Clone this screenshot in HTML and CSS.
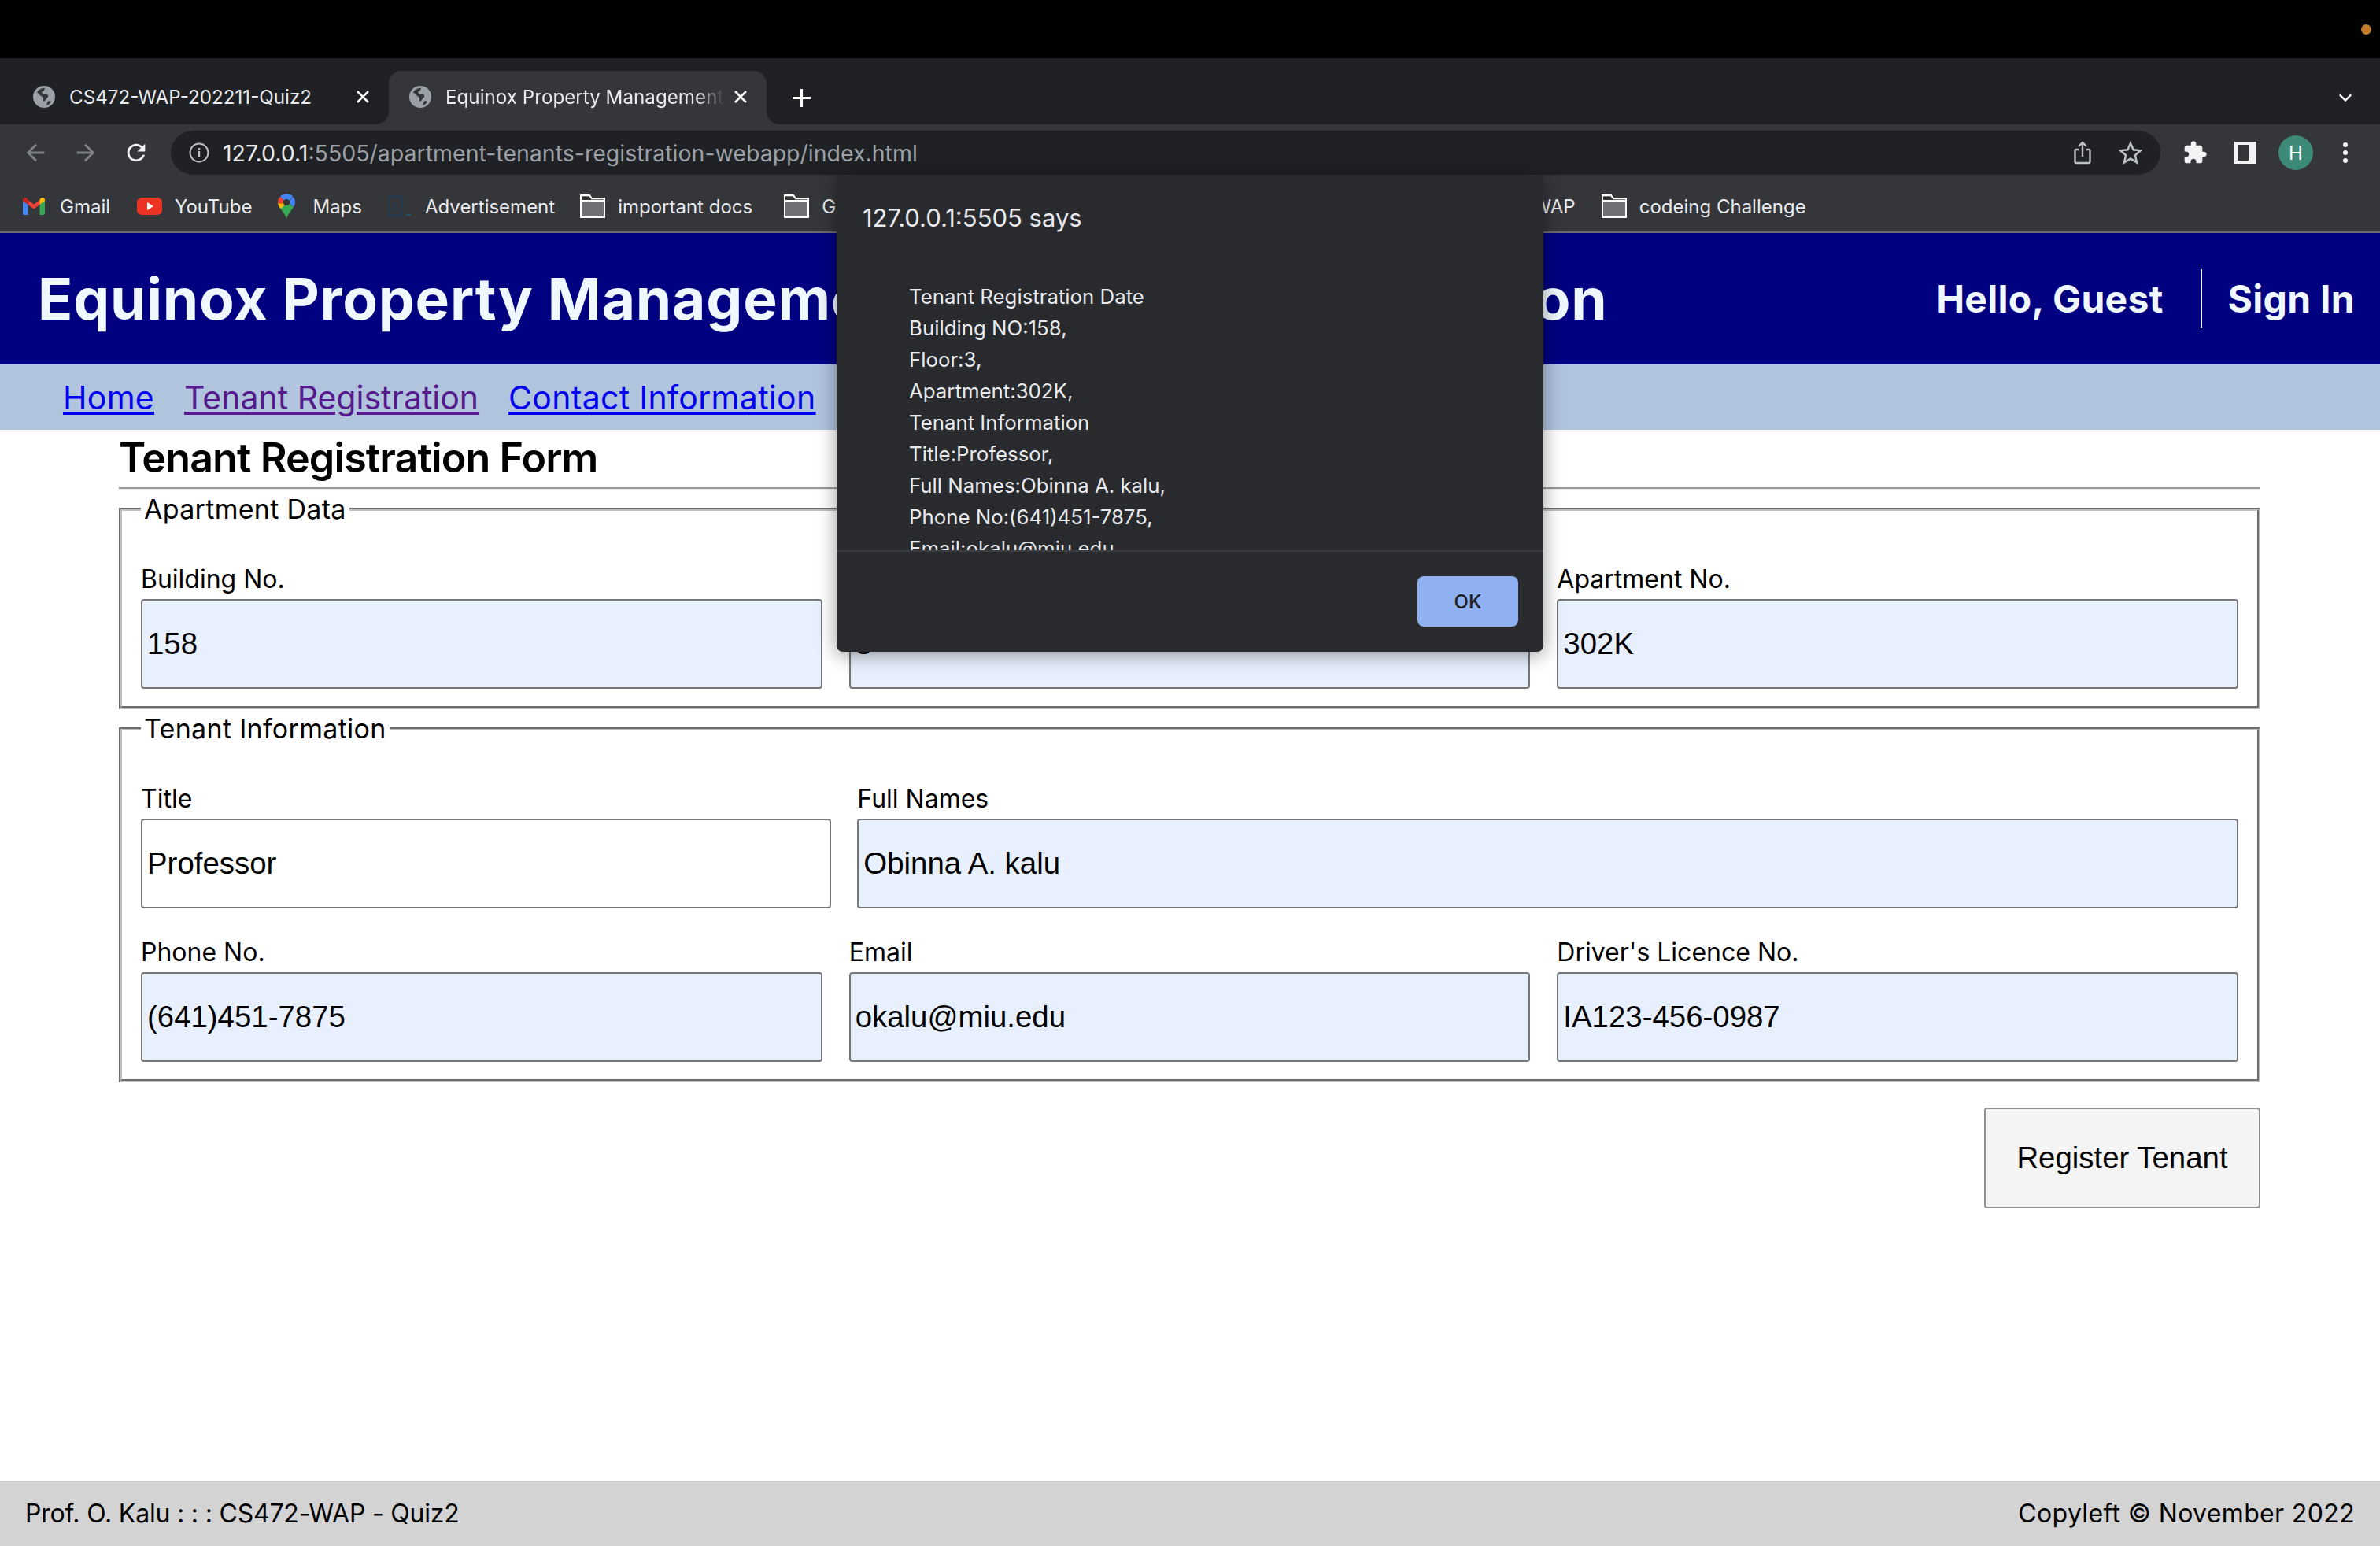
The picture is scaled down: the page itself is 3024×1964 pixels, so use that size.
FILE: index.html
```html
<!DOCTYPE html>
<html lang="en">
<head>
    <meta charset="UTF-8">
    <meta name="viewport" content="width=device-width, initial-scale=1.0">
    <title>Equinox Property Management</title>
    <link rel="stylesheet" href="styles.css">
</head>
<body>
    <svg class="defs" width="0" height="0">
        <symbol id="globe" viewBox="0 0 28 28">
            <circle cx="14" cy="14" r="14" fill="#9aa0a6"/>
            <path d="M13 3c-3 .4-6 2-8 5l5 5c1 1 3 1 3 3v3c0 1 2 1 2 0l4-5c1-1 0-3-2-3h-4l-2-3 3-2 1-3z" fill="#35363a"/>
            <path d="M20 19l3 1c-1 2-3 4-6 5l1-4z" fill="#35363a"/>
        </symbol>
        <symbol id="folder" viewBox="0 0 32 30">
            <path d="M1 1h11l3 4h16v24H1z" fill="#6f7073" stroke="#fff" stroke-width="2"/>
            <path d="M1 8h30" stroke="#fff" stroke-width="2"/>
            <path d="M2 6h12M2 4h10" stroke="#35363a" stroke-width="2"/>
        </symbol>
        <symbol id="close" viewBox="0 0 18 18">
            <path d="M2 2l14 14M16 2L2 16" stroke="#fff" stroke-width="2.500"/>
        </symbol>
    </svg>

    <div class="os-bar"><span class="os-dot"></span></div>

    <div class="tab-strip">
        <div class="tab">
            <svg class="tab-icon"><use href="#globe"/></svg>
            <span class="tab-title">CS472-WAP-202211-Quiz2</span>
            <svg class="tab-close"><use href="#close"/></svg>
        </div>
        <div class="tab tab-active">
            <svg class="tab-icon"><use href="#globe"/></svg>
            <span class="tab-title tab-fade">Equinox Property Management</span>
            <svg class="tab-close"><use href="#close"/></svg>
        </div>
        <svg class="new-tab" viewBox="0 0 24 24"><path d="M12 1v22M1 12h22" stroke="#fff" stroke-width="3"/></svg>
        <svg class="tab-list" viewBox="0 0 20 12"><path d="M2 2l8 8 8-8" fill="none" stroke="#fff" stroke-width="2.500"/></svg>
    </div>

    <div class="toolbar">
        <svg class="nav-icon" viewBox="0 0 24 24"><path fill="#7f8285" d="M20 11H7.830l5.590-5.590L12 4l-8 8 8 8 1.410-1.410L7.830 13H20v-2z"/></svg>
        <svg class="nav-icon" viewBox="0 0 24 24"><path fill="#7f8285" d="M4 11h12.170l-5.590-5.590L12 4l8 8-8 8-1.410-1.410L16.170 13H4v-2z"/></svg>
        <svg class="nav-icon" viewBox="0 0 24 24"><path fill="#f1f3f4" d="M17.650 6.350C16.200 4.900 14.210 4 12 4c-4.420 0-7.990 3.580-7.990 8s3.570 8 7.990 8c3.730 0 6.840-2.550 7.730-6h-2.080c-.82 2.330-3.040 4-5.650 4-3.310 0-6-2.690-6-6s2.690-6 6-6c1.660 0 3.140.69 4.220 1.780L13 11h7V4l-2.350 2.350z"/></svg>
        <div class="address-bar">
            <svg class="info-icon" viewBox="0 0 26 26"><circle cx="13" cy="13" r="11.500" fill="none" stroke="#bdc1c6" stroke-width="2"/><path d="M13 11v8M13 7v2.400" stroke="#bdc1c6" stroke-width="2.400"/></svg>
            <span class="url"><span class="url-host">127.0.0.1</span>:5505/apartment-tenants-registration-webapp/index.html</span>
            <svg class="bar-icon" viewBox="0 0 24 30"><path d="M7 11H4a1.500 1.500 0 0 0-1.500 1.500v14A1.500 1.500 0 0 0 4 28h16a1.500 1.500 0 0 0 1.500-1.500v-14A1.500 1.500 0 0 0 20 11h-3M12 20V3M7 7l5-5 5 5" fill="none" stroke="#bdc1c6" stroke-width="2.400"/></svg>
            <svg class="bar-icon star-icon" viewBox="0 0 30 30"><path d="M15 3l3.700 8.400 9.100.9-6.900 6 2 9-7.900-4.700-7.900 4.700 2-9-6.900-6 9.100-.9z" fill="none" stroke="#bdc1c6" stroke-width="2.600"/></svg>
        </div>
        <svg class="puzzle" viewBox="0 0 24 24"><path fill="#f1f3f4" d="M20.500 11H19V7c0-1.100-.9-2-2-2h-4V3.500C13 2.120 11.880 1 10.500 1S8 2.120 8 3.500V5H4c-1.100 0-1.990.9-1.990 2v3.800H3.500c1.490 0 2.700 1.210 2.700 2.700s-1.210 2.700-2.700 2.700H2V20c0 1.100.9 2 2 2h3.800v-1.500c0-1.490 1.210-2.700 2.700-2.700 1.490 0 2.700 1.210 2.700 2.700V22H17c1.100 0 2-.9 2-2v-4h1.500c1.380 0 2.500-1.120 2.500-2.500S21.880 11 20.500 11z"/></svg>
        <span class="side-panel"></span>
        <span class="avatar">H</span>
        <span class="menu-dots"><i></i><i></i><i></i></span>
    </div>

    <div class="bookmarks">
        <div class="bookmark gmail">
            <svg class="bm-icon" viewBox="0 0 28 22">
                <path fill="#4285f4" d="M0 3v17a2 2 0 0 0 2 2h4.500V9z"/>
                <path fill="#34a853" d="M28 3v17a2 2 0 0 1-2 2h-4.500V9z"/>
                <path fill="#ea4335" d="M6.500 9L14 14.500 21.500 9V3L14 8.500 6.500 3z"/>
                <path fill="#c5221f" d="M0 3c0-2.500 3-3.800 5-2.200L6.500 2v7L0 4z"/>
                <path fill="#fbbc04" d="M28 3c0-2.500-3-3.800-5-2.200L21.500 2v7L28 4z"/>
            </svg>
            <span>Gmail</span>
        </div>
        <div class="bookmark youtube">
            <svg class="bm-icon" viewBox="0 0 32 22"><rect width="32" height="22" rx="6" fill="#ea3323"/><path d="M13 6l8 5-8 5z" fill="#fff"/></svg>
            <span>YouTube</span>
        </div>
        <div class="bookmark maps">
            <svg class="bm-icon" viewBox="0 0 22 32">
                <path fill="#34a853" d="M2 17c3 5 7 8 9 15 2-7 6-10 9-15l-5-4z"/>
                <path fill="#fbbc04" d="M2 17c-1-2-2-4-2-6l7-1 3 3-6 6z"/>
                <path fill="#ea4335" d="M0 11c0-3 1-5 3-7l6 5-4 4-5-1z"/>
                <path fill="#4285f4" d="M3 4c4-5 13-5 16 0l-5 5-5 0z"/>
                <path fill="#4285f4" d="M19 4c2 2 3 4 3 7 0 2-1 4-2 6l-6-6z"/>
                <circle cx="11" cy="11" r="4" fill="#35363a"/>
            </svg>
            <span>Maps</span>
        </div>
        <div class="bookmark advert">
            <svg class="bm-icon" viewBox="0 0 32 26"><path d="M1 1h16v24H1z" fill="none" stroke="#1e3a50" stroke-width="2"/><path d="M12 10H7v7h5" fill="none" stroke="#1e3a50" stroke-width="2"/><path d="M22 24h6" stroke="#27506e" stroke-width="2"/></svg>
            <span>Advertisement</span>
        </div>
        <div class="bookmark">
            <svg class="bm-icon"><use href="#folder"/></svg>
            <span>important docs</span>
        </div>
        <div class="bookmark">
            <svg class="bm-icon"><use href="#folder"/></svg>
            <span>GitHub</span>
        </div>
        <div class="bookmark wap">
            <span>WAP</span>
        </div>
        <div class="bookmark">
            <svg class="bm-icon"><use href="#folder"/></svg>
            <span>codeing Challenge</span>
        </div>
    </div>

    <header class="site-header">
        <h1>Equinox Property Management Apartment Registration</h1>
        <div class="user-box">
            <span class="hello">Hello, Guest</span>
            <span class="sign-in">Sign In</span>
        </div>
    </header>

    <nav class="site-nav">
        <a href="#home" class="nav-link">Home</a>
        <a href="#register" class="nav-link visited">Tenant Registration</a>
        <a href="#contact" class="nav-link">Contact Information</a>
    </nav>

    <main>
        <h2>Tenant Registration Form</h2>
        <hr>
        <form>
            <fieldset>
                <legend>Apartment Data</legend>
                <div class="row row-3">
                    <div class="field"><label>Building No.</label><input class="filled" value="158"></div>
                    <div class="field"><label>Floor</label><input class="filled" value="3"></div>
                    <div class="field"><label>Apartment No.</label><input class="filled" value="302K"></div>
                </div>
            </fieldset>
            <fieldset>
                <legend>Tenant Information</legend>
                <div class="row row-1-2">
                    <div class="field"><label>Title</label><input value="Professor"></div>
                    <div class="field"><label>Full Names</label><input class="filled" value="Obinna A. kalu"></div>
                </div>
                <div class="row row-3">
                    <div class="field"><label>Phone No.</label><input class="filled" value="(641)451-7875"></div>
                    <div class="field"><label>Email</label><input class="filled" value="okalu@miu.edu"></div>
                    <div class="field"><label>Driver's Licence No.</label><input class="filled" value="IA123-456-0987"></div>
                </div>
            </fieldset>
            <div class="form-actions">
                <button type="button">Register Tenant</button>
            </div>
        </form>
    </main>

    <footer>
        <span class="foot-left">Prof. O. Kalu : : : CS472-WAP - Quiz2</span>
        <span class="foot-right">Copyleft &copy; November 2022</span>
    </footer>

    <div class="alert-box">
        <div class="alert-title">127.0.0.1:5505 says</div>
        <div class="alert-message">
            <p>Tenant Registration Date</p>
            <p>Building NO:158,</p>
            <p>Floor:3,</p>
            <p>Apartment:302K,</p>
            <p>Tenant Information</p>
            <p>Title:Professor,</p>
            <p>Full Names:Obinna A. kalu,</p>
            <p>Phone No:(641)451-7875,</p>
            <p>Email:okalu@miu.edu</p>
        </div>
        <div class="alert-actions">
            <button type="button" class="alert-ok">OK</button>
        </div>
    </div>
</body>
</html>
```

FILE: styles.css
```css
* {
    box-sizing: border-box;
}
body {
    margin: 0;
    min-height: 100vh;
    display: flex;
    flex-direction: column;
    font-family: Inter, "Noto Sans", sans-serif;
    background: #fff;
    color: #000;
}
.defs {
    display: none;
}

/* browser chrome */
.os-bar {
    height: 74px;
    background: #000;
    display: flex;
    align-items: center;
    justify-content: flex-end;
    padding-right: 11px;
}
.os-dot {
    width: 13px;
    height: 13px;
    border-radius: 50%;
    background: #c17d2c;
}
.tab-strip {
    height: 84px;
    background: #202124;
    display: flex;
    align-items: flex-end;
}
.tab {
    width: 494px;
    height: 68px;
    padding: 0 24px 2px 42px;
    display: flex;
    align-items: center;
    color: #e8eaed;
    font-size: 24.200px;
}
.tab-active {
    position: relative;
    width: 480px;
    padding: 0 24px 2px 26px;
    background: #35363a;
    border-radius: 16px 16px 0 0;
}
.tab-active::before,
.tab-active::after {
    content: "";
    position: absolute;
    bottom: 0;
    width: 16px;
    height: 16px;
}
.tab-active::before {
    left: -16px;
    background: radial-gradient(circle at 0 0, transparent 15.500px, #35363a 16px);
}
.tab-active::after {
    right: -16px;
    background: radial-gradient(circle at 100% 0, transparent 15.500px, #35363a 16px);
}
.tab-icon {
    width: 28px;
    height: 28px;
    flex: none;
    margin-right: 18px;
}
.tab-title {
    flex: 1;
    white-space: nowrap;
    overflow: hidden;
}
.tab-fade {
    -webkit-mask-image: linear-gradient(to right, #000 90%, transparent);
    mask-image: linear-gradient(to right, #000 90%, transparent);
}
.tab-close {
    flex: none;
    width: 18px;
    height: 18px;
    margin-left: 12px;
}
.new-tab {
    width: 25px;
    height: 25px;
    margin: 0 0 21px 32px;
}
.tab-list {
    width: 18px;
    height: 12px;
    margin: 0 35px 28px auto;
}
.toolbar {
    height: 72px;
    background: #35363a;
    display: flex;
    align-items: center;
    padding: 0 0 0 28px;
}
.nav-icon {
    width: 34px;
    height: 34px;
    flex: none;
    margin-right: 30px;
}
.nav-icon:nth-child(3) {
    margin-right: 27px;
}
.address-bar {
    width: 2528px;
    height: 56px;
    border-radius: 28px;
    background: #202124;
    display: flex;
    align-items: center;
    padding: 0 23px;
}
.info-icon {
    width: 26px;
    height: 26px;
    flex: none;
    margin-right: 17px;
}
.url {
    flex: 1;
    font-size: 28.500px;
    color: #9aa0a6;
    white-space: nowrap;
}
.url-host {
    color: #e8eaed;
}
.bar-icon {
    width: 24px;
    height: 30px;
    flex: none;
    margin-right: 34px;
}
.star-icon {
    width: 30px;
    margin-right: 0;
}
.puzzle {
    width: 32px;
    height: 32px;
    flex: none;
    margin-left: 28px;
}
.side-panel {
    width: 28px;
    height: 28px;
    margin-left: 34px;
    flex: none;
    background: #35363a;
    border: 4px solid #f1f3f4;
    border-right-width: 10px;
}
.avatar {
    width: 44px;
    height: 44px;
    margin-left: 28px;
    flex: none;
    border-radius: 50%;
    background: #3d8a79;
    color: #fff;
    font-size: 24px;
    display: flex;
    align-items: center;
    justify-content: center;
}
.menu-dots {
    margin-left: 38px;
    display: flex;
    flex-direction: column;
    gap: 4px;
}
.menu-dots i {
    width: 6px;
    height: 6px;
    border-radius: 50%;
    background: #f1f3f4;
}
.bookmarks {
    height: 66px;
    background: #35363a;
    border-bottom: 2px solid #6b6c6f;
    display: flex;
    align-items: center;
    padding: 0 0 0 29px;
    font-size: 24px;
    color: #e8eaed;
    white-space: nowrap;
}
.bookmark {
    display: flex;
    align-items: center;
    gap: 16px;
    margin-right: 40px;
}
.bm-icon {
    width: 32px;
    height: 30px;
    flex: none;
}
.gmail {
    gap: 19px;
    margin-right: 34px;
}
.gmail .bm-icon {
    width: 28px;
    height: 22px;
}
.youtube .bm-icon {
    height: 22px;
}
.youtube {
    margin-right: 33px;
}
.maps {
    gap: 22px;
    margin-right: 34px;
}
.maps .bm-icon {
    width: 22px;
    height: 32px;
}
.advert {
    gap: 14px;
    margin-right: 32px;
}
.wap {
    margin-left: 785px;
    margin-right: 33px;
}

/* page */
.site-header {
    height: 167px;
    background: #000080;
    color: #f0f8ff;
    display: flex;
    align-items: center;
    justify-content: space-between;
    padding: 0 32px 0 48px;
}
.site-header h1 {
    margin: 0;
    font-size: 73px;
    font-weight: 700;
    letter-spacing: 0.8px;
    white-space: nowrap;
}
.user-box {
    display: flex;
    align-items: center;
    font-size: 48px;
    font-weight: 700;
    letter-spacing: 0.3px;
}
.hello {
    padding-right: 47px;
}
.sign-in {
    border-left: 2px solid #f0f8ff;
    padding: 8px 0 8px 33px;
}
.site-nav {
    height: 83px;
    background: #b0c4de;
    display: flex;
    align-items: center;
    gap: 38px;
    padding: 0 0 0 80px;
    font-size: 41px;
    letter-spacing: 0.3px;
}
.nav-link {
    color: #0000ee;
}
.visited {
    color: #551a8b;
    letter-spacing: 0;
}
main {
    flex: 1;
    padding: 0 152px 0 151px;
}
h2 {
    margin: 0;
    font-size: 52px;
    line-height: 72px;
    font-weight: 600;
    letter-spacing: -0.9px;
}
hr {
    margin: 1px 0 3px;
    border: 0;
    border-top: 2px solid #999;
    border-bottom: 2px solid #eee;
}
fieldset {
    margin: 0 0 4px;
    padding: 47px 24px 22px;
    border: 4px groove #c0c0c0;
    min-width: 0;
}
legend {
    padding: 0 4px;
    font-size: 34px;
    letter-spacing: 0.3px;
}
.row {
    display: grid;
    column-gap: 34px;
}
.row + .row {
    margin-top: 34px;
}
.row-3 {
    grid-template-columns: 1fr 1fr 1fr;
}
.row-1-2 {
    grid-template-columns: 1fr 2fr;
    column-gap: 33px;
}
.field label {
    display: block;
    font-size: 32px;
    line-height: 44px;
    margin-bottom: 3px;
}
.field input {
    display: block;
    width: 100%;
    height: 114px;
    padding: 0 6px;
    border: 2px solid #767676;
    border-radius: 4px;
    background: #fff;
    font-family: "Liberation Sans", Arial, sans-serif;
    font-size: 38.400px;
    color: #000;
}
.field input.filled {
    background: #e8f0fe;
}
.form-actions {
    display: flex;
    justify-content: flex-end;
    margin-top: 32px;
}
.form-actions button {
    width: 351px;
    height: 128px;
    border: 2px solid #8f8f8f;
    border-radius: 4px;
    background: #f4f4f4;
    font-family: "Liberation Sans", Arial, sans-serif;
    font-size: 38.400px;
    color: #000;
}
footer {
    height: 83px;
    background: #d3d3d3;
    display: flex;
    align-items: center;
    justify-content: space-between;
    padding: 0 32px;
    font-size: 32px;
}
.foot-left {
    letter-spacing: -0.2px;
}
.foot-right {
    letter-spacing: 0.35px;
}

/* alert dialog */
.alert-box {
    position: absolute;
    top: 223px;
    left: 1063px;
    width: 898px;
    height: 605px;
    background: #292a2d;
    border-radius: 8px;
    box-shadow: 0 4px 24px rgba(0, 0, 0, 0.4);
    display: flex;
    flex-direction: column;
    color: #e8eaed;
}
.alert-title {
    padding: 36px 33px 0;
    font-size: 31px;
    line-height: 36px;
}
.alert-message {
    flex: 1;
    min-height: 0;
    overflow: hidden;
    margin-top: 62px;
    padding-left: 92px;
    font-size: 25.800px;
    line-height: 40px;
}
.alert-message p {
    margin: 0;
}
.alert-actions {
    height: 129px;
    border-top: 2px solid #3c3d40;
    display: flex;
    justify-content: flex-end;
    padding: 31px 32px 0 0;
}
.alert-ok {
    width: 128px;
    height: 64px;
    border: 0;
    border-radius: 8px;
    background: #8fb1f2;
    color: #202124;
    font-family: Inter, sans-serif;
    font-size: 24px;
    font-weight: 500;
}
```
